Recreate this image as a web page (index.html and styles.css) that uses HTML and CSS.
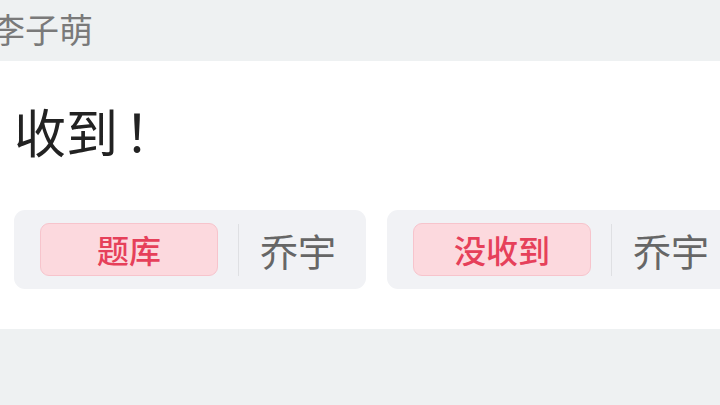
FILE: index.html
```html
<!DOCTYPE html>
<html lang="zh-CN">
  <head>
    <meta charset="UTF-8" />
    <title>收到</title>
    <link rel="stylesheet" href="styles.css">
  </head>
  <body>
    <div class="sender">李子萌</div>
    <div class="message">
      <div class="text">收到<span class="bang">！</span></div>
      <div class="replies">
        <div class="reply">
          <span class="tag">题库</span>
          <span class="sep"></span>
          <span class="who">乔宇</span>
        </div>
        <div class="reply">
          <span class="tag">没收到</span>
          <span class="sep"></span>
          <span class="who">乔宇</span>
        </div>
      </div>
    </div>
  </body>
</html>
```

FILE: styles.css
```css
body {
  margin: 0;
  width: 720px;
  height: 405px;
  overflow: hidden;
  background-color: #eef1f2;
  font-family: "Noto Sans CJK SC", "Noto Sans", sans-serif;
}
.sender {
  height: 61px;
  line-height: 58px;
  margin-left: -9px;
  font-size: 34px;
  color: #7a7a7a;
}
.message {
  background-color: #fff;
  height: 268px;
  padding: 0 0 0 14px;
  box-sizing: border-box;
}
.text {
  padding-top: 36px;
  font-size: 52px;
  line-height: 68px;
  color: #222;
}
.bang {
  margin-left: 6px;
}
.replies {
  display: flex;
  gap: 21px;
  margin-top: 45px;
  white-space: nowrap;
}
.reply {
  display: flex;
  align-items: center;
  flex-shrink: 0;
  height: 79px;
  padding: 0 30px 0 26px;
  background-color: #f1f2f5;
  border-radius: 11px;
  box-sizing: border-box;
}
.tag {
  width: 178px;
  height: 53px;
  line-height: 51px;
  text-align: center;
  font-size: 32px;
  font-weight: 500;
  color: #e6405a;
  background-color: #fcd9de;
  border: 1px solid #f7c4cc;
  border-radius: 9px;
  box-sizing: border-box;
}
.sep {
  width: 1px;
  height: 52px;
  margin: 0 21px 0 20px;
  background-color: #dfe0e3;
}
.who {
  font-size: 38px;
  color: #666;
}
```
